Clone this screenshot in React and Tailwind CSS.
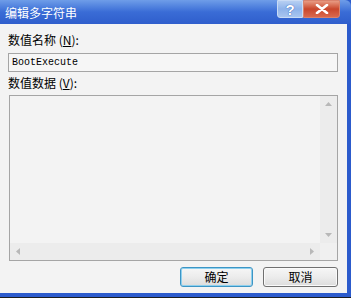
import React from 'react';

const cjk = "font-['SimSun','Noto_Sans_CJK_SC',sans-serif]";

function TitleButtons() {
    return (
        <div className="flex h-[18px] mt-[0px] mr-[11px]">
            {/* help */}
            <div className="w-[26px] h-[18px] rounded-bl-[3px] border border-[#c9dbf5] bg-gradient-to-b from-[#b6cff2] via-[#8fb3ea] to-[#a9c5ef] flex items-center justify-center">
                <span className="text-[15px] leading-none font-bold text-white font-['Liberation_Sans',sans-serif] [text-shadow:0_0_1px_#3a64b8,0_0_1px_#3a64b8]">?</span>
            </div>
            {/* close */}
            <div className="w-[37px] h-[18px] rounded-br-[3px] border border-[#d9826c] bg-gradient-to-b from-[#e79a82] via-[#c9462b] to-[#d8684d] flex items-center justify-center">
                <svg width="14" height="10" viewBox="0 0 14 10">
                    <path d="M2 1 L12 9 M12 1 L2 9" stroke="#fff" strokeWidth="2.6" strokeLinecap="round" />
                </svg>
            </div>
        </div>
    );
}

function DialogButton({ label, primary }) {
    return (
        <div
            className={`h-[20px] rounded-[3px] border flex items-center justify-center bg-gradient-to-b from-[#f6f6f6] via-[#ececec] to-[#dcdcdc] text-[12px] text-black ${cjk} ${primary
                ? 'w-[73px] border-[#3c95c5] shadow-[inset_0_0_0_1px_#8ed0ee]'
                : 'w-[75px] border-[#707070] shadow-[inset_0_0_0_1px_#fafafa]'
                }`}
        >
            {label}
        </div>
    );
}

export default function App() {
    return (
        <div className="w-[351px] h-[298px] overflow-hidden bg-[#1c1c1c]">
            <div className="w-[351px] h-[297px] flex flex-col bg-[#2c5bcc]">
                {/* Title bar */}
                <div className="h-[24px] flex items-start justify-between bg-gradient-to-b from-[#6f9de8] via-[#3a6cd6] to-[#2f5ecc] rounded-tr-[6px]">
                    <span className={`pl-[5px] pt-[6px] text-[12px] leading-[14px] text-white ${cjk}`}>编辑多字符串</span>
                    <TitleButtons />
                </div>

                {/* Body */}
                <div className="w-[347px] h-[269px] bg-[#f3f3f3] px-[8px] flex flex-col">
                    <div className={`mt-[9px] h-[14px] text-[12px] leading-[14px] text-black ${cjk}`}>
                        数值名称 (<span className="underline">N</span>):
                    </div>
                    <div className="mt-[6px] w-[330px] h-[19px] border border-[#a5a5a5] bg-[#f6f6f6] flex items-center pl-[3px]">
                        <span className="text-[10px] leading-none text-black font-['Liberation_Mono',monospace]">BootExecute</span>
                    </div>
                    <div className={`mt-[4px] h-[14px] text-[12px] leading-[14px] text-black ${cjk}`}>
                        数值数据 (<span className="underline">V</span>):
                    </div>
                    <div className="mt-[5px] ml-[1px] w-[329px] h-[166px] border border-[#a5a5a5] bg-[#f3f3f3] flex flex-col">
                        <div className="flex-1 flex">
                            <div className="flex-1" />
                            <div className="w-[17px] bg-[#ececec] flex flex-col items-center justify-between py-[6px]">
                                <svg width="7" height="4" viewBox="0 0 7 4"><path d="M0 4 L3.5 0 L7 4 Z" fill="#b8b8b8" /></svg>
                                <svg width="7" height="4" viewBox="0 0 7 4"><path d="M0 0 L3.5 4 L7 0 Z" fill="#b8b8b8" /></svg>
                            </div>
                        </div>
                        <div className="h-[17px] flex">
                            <div className="flex-1 bg-[#ececec] flex items-center justify-between px-[6px]">
                                <svg width="4" height="7" viewBox="0 0 4 7"><path d="M4 0 L0 3.5 L4 7 Z" fill="#b8b8b8" /></svg>
                                <svg width="4" height="7" viewBox="0 0 4 7"><path d="M0 0 L4 3.5 L0 7 Z" fill="#b8b8b8" /></svg>
                            </div>
                            <div className="w-[17px] bg-[#f0f0f0]" />
                        </div>
                    </div>
                    <div className="mt-[6px] flex justify-end gap-[10px] pr-[1px]">
                        <DialogButton label="确定" primary />
                        <DialogButton label="取消" />
                    </div>
                </div>
            </div>
        </div>
    );
}
